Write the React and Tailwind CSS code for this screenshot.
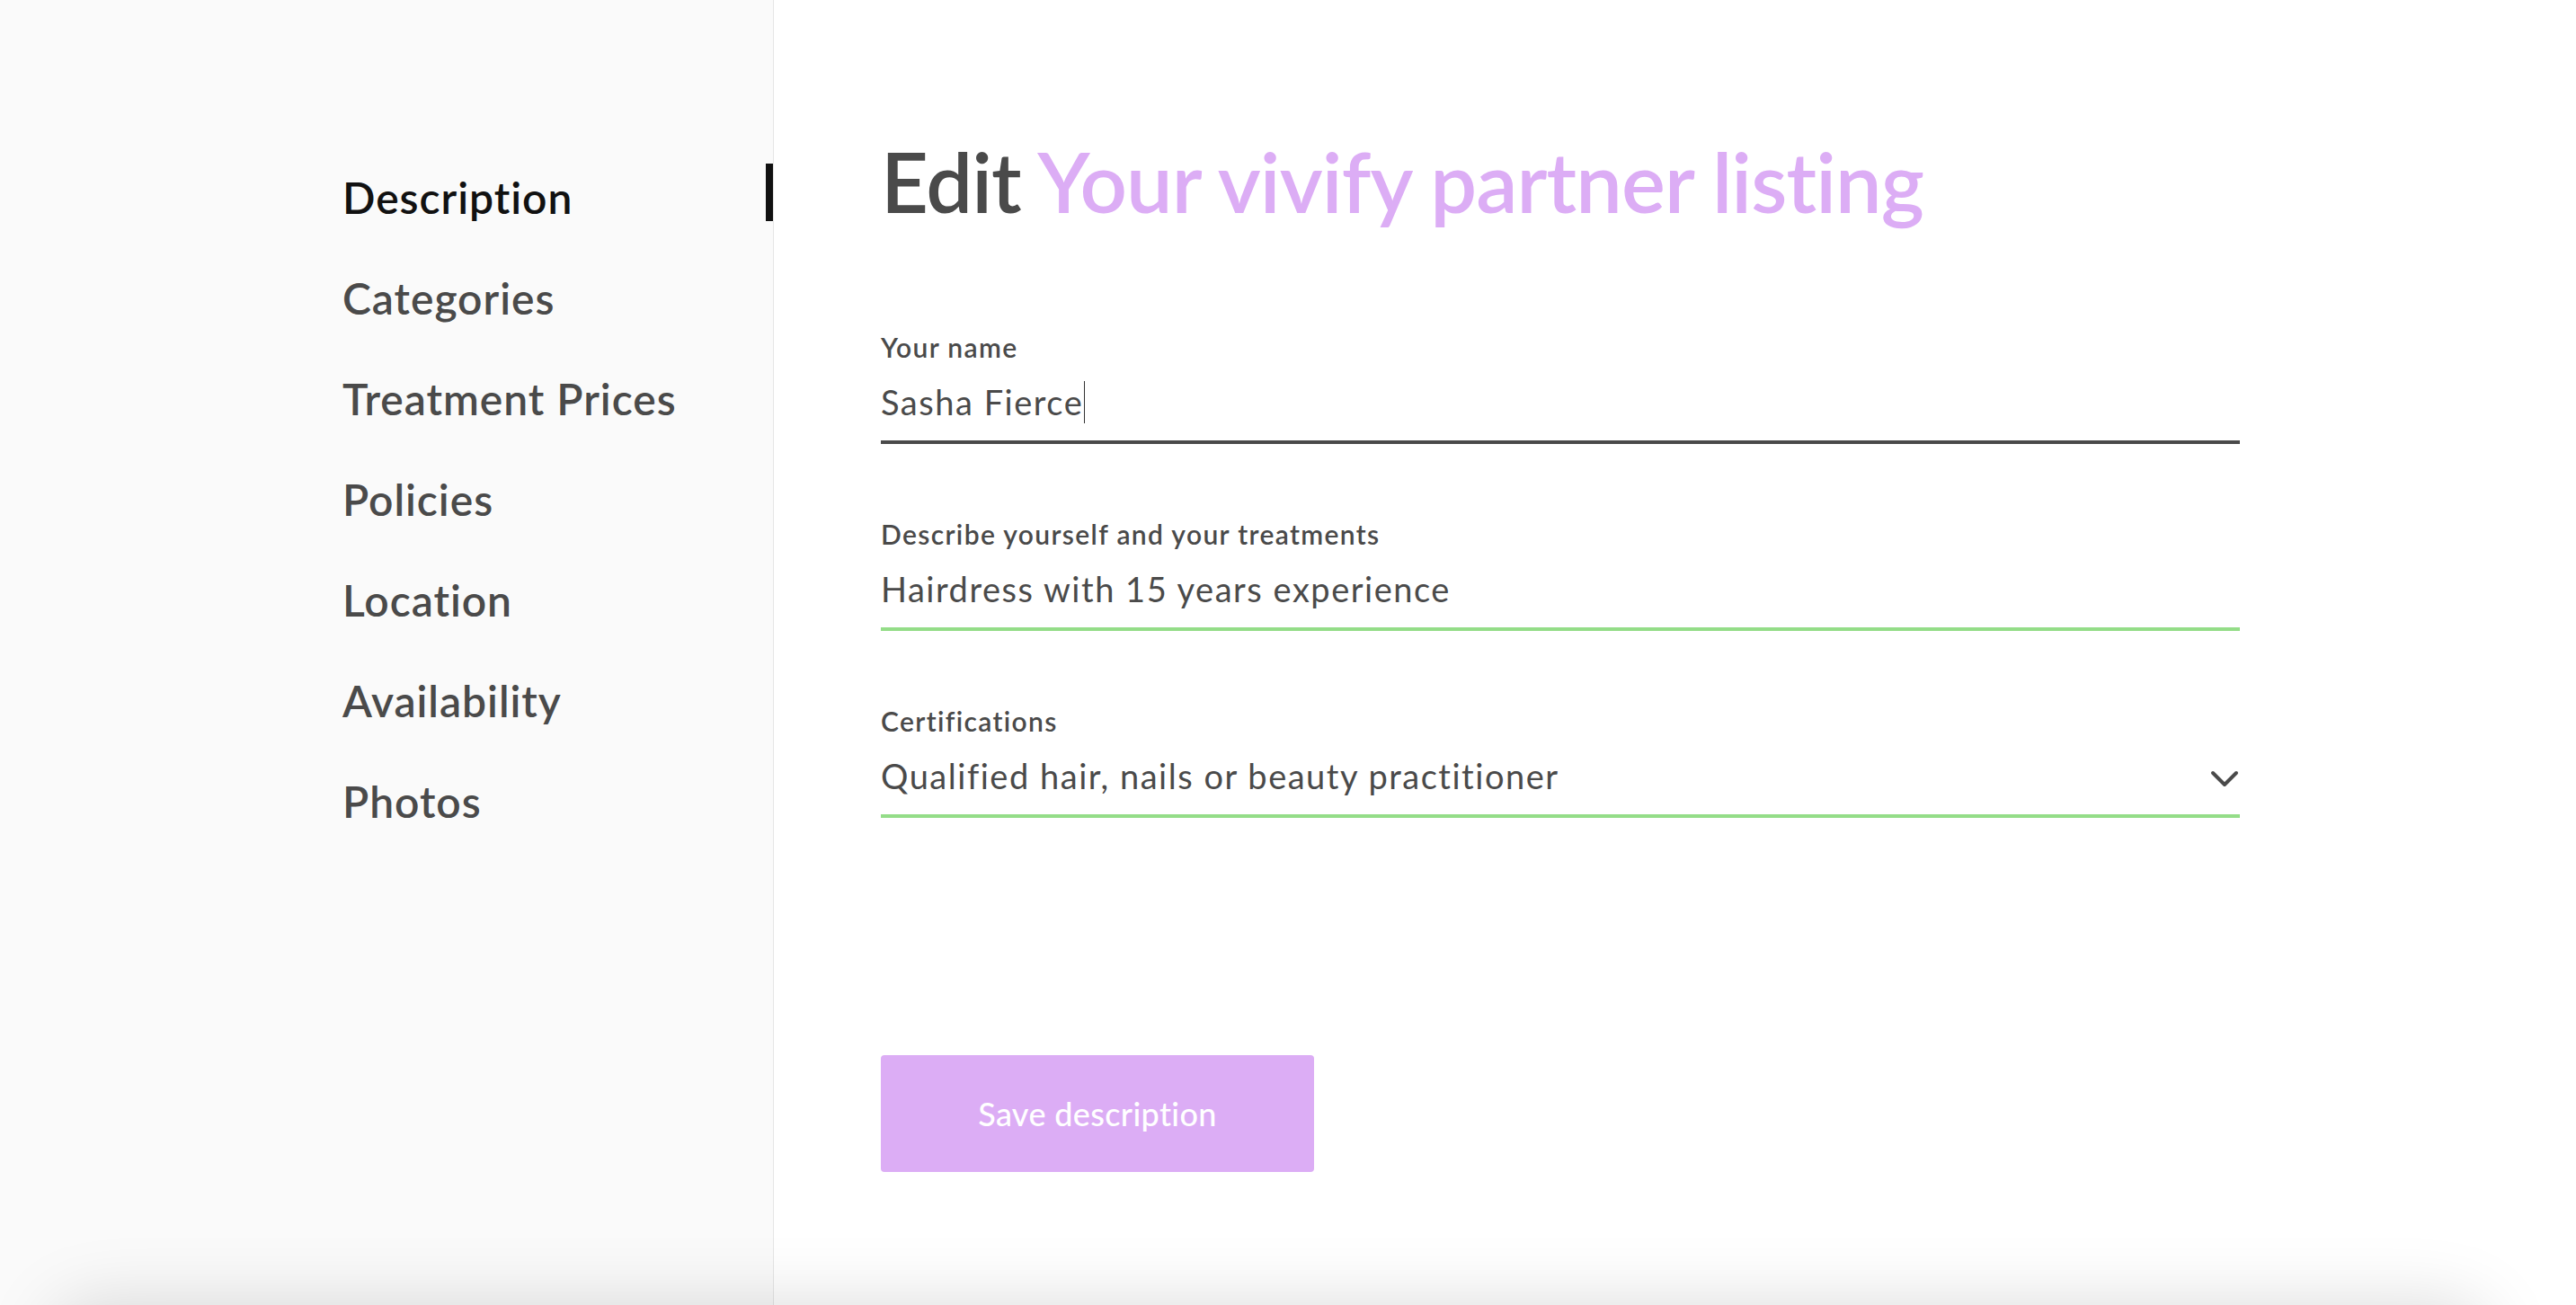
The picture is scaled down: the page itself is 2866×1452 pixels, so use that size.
import React from 'react';

const navItems = [
  'Description',
  'Categories',
  'Treatment Prices',
  'Policies',
  'Location',
  'Availability',
  'Photos',
];

const Field = ({ label, value, focused, select, children }) => (
  <div className="mb-[86px]">
    <div className="text-[30px] leading-[28px] font-semibold tracking-[0.045em] text-[#4a4a4a]">{label}</div>
    <div
      className={
        'mt-[23px] pb-[19px] border-b-4 flex items-center justify-between ' +
        (focused ? 'border-[#4a4a4a]' : 'border-[#94dd88]')
      }
    >
      <div className="flex items-center text-[38px] leading-[48px] tracking-[0.04em] text-[#4a4a4a]">
        {value}
        {children}
      </div>
      {select && (
        <svg width="32" height="20" viewBox="0 0 32 20" className="mr-[1px] mt-[8px]">
          <polyline
            points="3,3 16,16 29,3"
            fill="none"
            stroke="#4a4a4a"
            strokeWidth="4"
            strokeLinecap="round"
            strokeLinejoin="round"
          />
        </svg>
      )}
    </div>
  </div>
);

export default function App() {
  return (
    <div
      className="h-screen overflow-hidden flex flex-col bg-white"
      style={{ fontFamily: 'Lato, "Noto Sans", sans-serif' }}
    >
      <div className="h-screen shrink-0 flex">
        {/* sidebar nav */}
        <aside className="w-[861px] shrink-0 bg-[#fafafa] border-r border-[#e6e6e6] pt-[164px]">
          {navItems.map((item, i) => (
            <div key={item} className="flex items-start justify-between h-[112px]">
              <span
                className={
                  'pl-[381px] text-[48px] leading-[112px] font-semibold tracking-[0.02em] ' +
                  (i === 0 ? 'text-[#111111]' : 'text-[#4a4a4a]')
                }
              >
                {item}
              </span>
              {i === 0 && <span className="mt-[18px] h-[64px] w-[8px] bg-[#111111]" />}
            </div>
          ))}
        </aside>

        {/* edit form */}
        <main className="flex-1 pl-[119px] pt-[156px]">
          <div className="w-[1512px]">
            <h1 className="text-[92px] leading-[92px] font-semibold tracking-[-0.01em] mb-[124px]">
              <span className="text-[#4a4a4a]">Edit</span>{' '}
              <span className="text-[#dcadf5]">Your vivify partner listing</span>
            </h1>

            <Field label="Your name" value="Sasha Fierce" focused>
              <span className="ml-[1px] w-[1px] h-[47px] bg-[#333]" />
            </Field>
            <Field label="Describe yourself and your treatments" value="Hairdress with 15 years experience" />
            <Field label="Certifications" value="Qualified hair, nails or beauty practitioner" select />

            <button className="mt-[178px] w-[482px] h-[130px] rounded-[4px] bg-[#dcadf5] text-white text-[36px] font-medium tracking-[0.01em]">
              Save description
            </button>
          </div>
        </main>
      </div>

      {/* footer card just below the fold, only its shadow shows */}
      <div className="shrink-0 h-[200px] ml-[60px] mr-[100px] bg-white rounded-[40px] shadow-[0_0_80px_rgba(0,0,0,0.15)]" />
    </div>
  );
}
